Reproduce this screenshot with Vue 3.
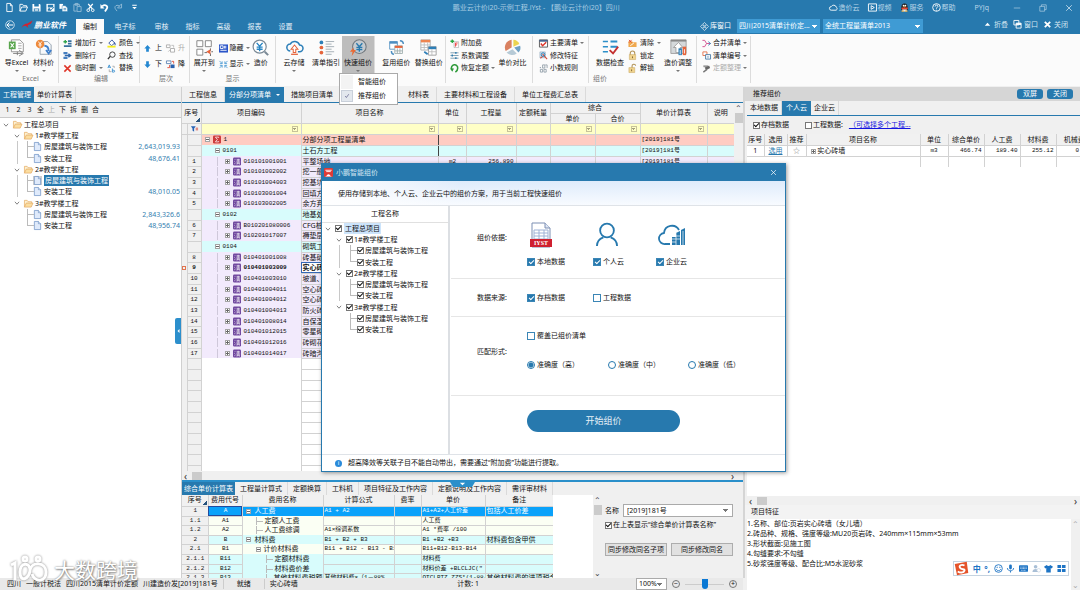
<script setup>
const icons = {
  file: '<path d="M4 1h8l4 5v13H4zM12 1v5h4" class="s"/>',
  open: '<path d="M2 18V3h6l2 3h7v3M2 18l4-9h13l-4 9z" class="s"/>',
  save: '<path d="M1 2h16l2 2v15H1z" fill="currentColor"/><path d="M5 2h10v6H5zM4 12h12v7H4z" fill="#2779ae"/><path d="M6 14h8v3H6z" fill="currentColor"/>',
  saveas: '<path d="M1 2h18v17H1z" fill="currentColor"/><path d="M4 4h12v6H4zM4 13l4-2 4 6H4z" fill="#2779ae"/><path d="M10 17l8-8" stroke="#2779ae" stroke-width="2"/>',
  copy: '<path d="M1 2h8v11H1z" fill="currentColor"/><path d="M7 6h7l5 5v8H7z" fill="currentColor" stroke="#2779ae"/><path d="M10 12h6M10 15h6" stroke="#2779ae" stroke-width="1.5"/>',
  paste: '<path d="M8 18H2V3h12v4M5 1h6v4H5zM9 8h9v11H9z" class="s"/>',
  cut: '<path d="M5 2l9 11M15 2L6 13" stroke="currentColor" stroke-width="3"/><circle cx="5" cy="16" r="3" class="s"/><circle cx="15" cy="16" r="3" class="s"/>',
  undo: '<path d="M5 7c7-5 14 0 10 6l-4 6" fill="none" stroke="currentColor" stroke-width="4"/><path d="M1 2v10h9z" fill="currentColor"/>',
  redo: '<path d="M15 7C8 2 1 8 6 14l3 4" class="s"/><path d="M19 2v9h-9z" class="s"/>',
  more: '<path d="M5 4h10v2H5zM5 9h10l-5 5z" fill="currentColor"/>',
  cloudw: '<path d="M5 16a4 4 0 010-8 6 6 0 0111 1 4 4 0 010 7z" class="s"/>',
  play: '<path d="M1 2h18v16H1zM7 6l7 4-7 4z" class="s"/>',
  qq: '<path d="M3 12C3 3 6 1 10 1s7 2 7 11l1 4-3-1v3H5v-3l-3 1z" fill="#222"/><path d="M5 14h10v5H5z" fill="#eee"/><path d="M4 10h13v4H3z" fill="#e8432e"/><circle cx="8" cy="6" r="2" fill="#fff"/><circle cx="12" cy="6" r="2" fill="#fff"/><path d="M7 8h6l-3 2z" fill="#f7a520"/><path d="M3 18h6M11 18h6" stroke="#f7a520" stroke-width="2"/>',
  help: '<circle cx="10" cy="10" r="8.5" class="s"/><path d="M7 8c0-5 7-4 6 0-1 2-3 2-3 4v1M10 15v2" class="s"/>',
  min: '<path d="M2 10h16" class="s t"/>',
  rest: '<path d="M2 6h12v12H2zM6 6V2h12v12h-4" class="s t"/>',
  x: '<path d="M3 3l14 14M17 3L3 17" class="s"/>',
  xb: '<path d="M4 4l12 12M16 4L4 16" stroke="currentColor" stroke-width="4"/>',
  up: '<path d="M4 13l6-7 6 7z" fill="currentColor"/>',
  win: '<path d="M2 1h11v10H2zM7 7h11v11H7z" class="s"/><path d="M7 7h11v4H7z" fill="currentColor"/>',
  back: '<circle cx="10" cy="10" r="8.5" class="s t"/><path d="M16 10H5M9 5l-5 5 5 5" class="s"/>',
  diam: '<path d="M10 1l4 4-4 4-4-4zM5 6l4 4-4 4-4-4zM15 6l4 4-4 4-4-4zM10 11l4 4-4 4-4-4z" class="s t"/>',
  excel: '<path d="M4 1h10l4 4v10H4z" fill="#fff" stroke="#888"/><path d="M12 5h4M12 8h4M12 11h4" stroke="#999"/><path d="M1 3h8v9H1z" fill="#58a54d"/><path d="M3 5l4 5M7 5l-4 5" stroke="#fff" stroke-width="1.4"/><path d="M6 17h11M13 13l5 4-5 3M11 15v4" fill="none" stroke="#777"/>',
  matprice: '<path d="M6 3h9l4 4v11H6z" fill="#f7f9fb" stroke="#8a98a8"/><circle cx="6" cy="6" r="5" fill="#ee8a3c"/><path d="M4 3l2 3 2-3M6 6v4M4 7h4" stroke="#fff" fill="none"/><path d="M11 8c4 0 5 3 5 6M13 13l3 4 3-4" fill="none" stroke="#3f7fcb" stroke-width="2.2"/>',
  addrow: '<path d="M1 6h8M5 2v8" stroke="#2fa44c" stroke-width="3"/><path d="M11 3h8v4h-8zM11 9h8v3h-8zM2 14h17v4H2z" fill="#39709e"/>',
  delrow: '<path d="M1 2h9v5H1zM1 13h9v5H1z" fill="#467fc0"/><path d="M4 10h12M12 6l5 4-5 4" fill="none" stroke="#2e66ac" stroke-width="3"/>',
  redx: '<path d="M3 3l14 14M17 3L3 17" stroke="#df3428" stroke-width="3.4"/>',
  paint: '<path d="M4 9l7-7 6 7-7 6z" fill="#fff" stroke="#2c4f9e" stroke-width="2"/><path d="M16 8c3 3 2 5 1 5" stroke="#2c4f9e" stroke-width="2.5" fill="none"/><path d="M1 15h18v4H1z" fill="#f7ee1b"/>',
  find: '<circle cx="12" cy="8" r="6" fill="none" stroke="#333" stroke-width="2"/><path d="M7 12l-5 6" stroke="#333" stroke-width="3"/>',
  repl: '<path d="M2 9l3-7 3 7M3 7h4M12 10v8h3a2 2 0 000-4h-3" fill="none" stroke="#3d92d0" stroke-width="2"/><path d="M5 12v5h5M12 5h4v4" fill="none" stroke="#999" stroke-width="1.6"/>',
  aup: '<path d="M10 2l7 8h-4v7H7v-7H3z" fill="#2387d1"/>',
  adn: '<path d="M10 18l7-8h-4V3H7v7H3z" fill="#2387d1"/>',
  lvup: '<path d="M1 2h8v6H1zM10 10h9v8h-9z" fill="#fff" stroke="#aaa" stroke-width="2"/><path d="M5 17l5-5M12 3h5v5" stroke="#bbb" fill="none" stroke-width="2"/>',
  lvdn: '<path d="M1 2h10v6H1z" fill="#fff" stroke="#5e84b4" stroke-width="2"/><path d="M10 10h9v8h-9z" fill="#2a62ad"/><path d="M13 3h4v5M3 17h5v-6" stroke="#df4b38" fill="none" stroke-width="2"/>',
  expand: '<path d="M1 2h7v7H1zM11 2h7v7h-7zM1 12h7v7H1z" fill="#fff" stroke="#777"/><path d="M10 16h3M17 11v3M17 17v3M18 15h2" stroke="#555"/><path d="M12 15l5-3v6z" fill="#e8633a"/>',
  hide: '<path d="M0 1h20v18H0z" fill="#2b55c8"/><path d="M3 4h6v6H3zM12 4v6M15 4v6M3 14h14" fill="none" stroke="#fff" stroke-width="2"/>',
  show: '<path d="M1 2l6 6M19 2l-6 6M1 18l6-6M19 18l-6-6M7 3v5H2M13 3v5h5M7 17v-5H2M13 17v-5h5" stroke="#3d92d0" stroke-width="1.7" fill="none"/>',
  yenm: '<circle cx="9" cy="9" r="7.7" fill="#fff" stroke="#7b8a96" stroke-width="1.4"/><path d="M15 15l4 4" stroke="#7b8a96" stroke-width="2.4"/><path d="M5.5 4.5l3.5 4 3.5-4M9 8.5v6M5.5 9.500h7M5.500 12h7" fill="none" stroke="#2785c4" stroke-width="1.600"/>',
  cloudup: '<path d="M5 14a4 4 0 010-8 6 6 0 0111 1 4 4 0 010 8h-2" fill="none" stroke="#2d7fb8" stroke-width="1.8"/><path d="M10 7l-4 5h2.500v4h3v-4H14z" fill="#fff" stroke="#e5643b" stroke-width="1.2"/><path d="M6 18h8" stroke="#e5643b" stroke-width="1.5"/>',
  guide: '<circle cx="4" cy="4" r="2.2" fill="#2d7fb8"/><circle cx="4" cy="10" r="2.2" fill="#e5643b"/><circle cx="4" cy="16" r="2.2" fill="#e5643b"/><path d="M9 3h10M9 6h7M9 9h10M9 12h7M9 15h10M9 18h7" stroke="#9aa4ac"/>',
  quick: '<circle cx="11" cy="9" r="8" fill="#c5cbd0" stroke="#6f777d" stroke-width="1.2"/><path d="M7.500 5l3.500 4 3.500-4M11 9v6M7.500 10h7M7.500 12.500h7" fill="none" stroke="#2779ae" stroke-width="1.6"/><path d="M4 10l-4 5h3l-1 5 5-7H4z" fill="#ea6a34"/>',
  reuse: '<path d="M2 3h9v9H2z" fill="#fff" stroke="#4c8ec0"/><path d="M8 8h9v9H8z" fill="#fff" stroke="#9aa"/><path d="M2 3h9v2.500H2z" fill="#4c8ec0"/><path d="M8 8h9v2.500H8z" fill="#e5643b"/><path d="M14 2c3 0 4 2 4 4M4 14c0 3 1 4 3 4" fill="none" stroke="#4c8ec0" stroke-width="1.7"/><path d="M11 11v6M14 11v6M8 14h9" stroke="#9aa"/>',
  swap: '<path d="M1 1h11v12H1z" fill="#fff" stroke="#aaa"/><path d="M1 1h11v3H1z" fill="#ee8550"/><path d="M1 7h11M1 10h11M5 4v9M9 4v9" stroke="#bbb"/><path d="M10 9h9v10h-9z" fill="#fff" stroke="#999"/><path d="M10 9h9v3h-9z" fill="#2d7fb8"/><path d="M14 12v7M10 15h9" stroke="#bbb"/><path d="M5 15l4 3" stroke="#2d7fb8" stroke-width="2"/>',
  addf: '<path d="M1 5h8M5 1v8" stroke="#25a83f" stroke-width="3"/><path d="M9 6h10v13H9z" fill="#fff" stroke="#888"/><path d="M12 17V9h5M12 13h4" stroke="#e33" stroke-width="2" fill="none"/>',
  sliders: '<path d="M1 4h18M1 10h18M1 16h18" stroke="#4a7692" stroke-width="1.5"/><path d="M13 2v4M5 8v4M13 14v4" stroke="#2779ae" stroke-width="3"/>',
  restore: '<path d="M4 12A7 7 0 1117 10c0 4-2 6-5 8" fill="none" stroke="#2f9a3a" stroke-width="3.5"/><path d="M0 10h9l-4 7z" fill="#2f9a3a"/>',
  pie: '<path d="M9 10V1a9 9 0 00-7 13z" fill="#d98161"/><path d="M11 9V1a8 8 0 017 5z" fill="#ecd44f"/><path d="M12 10l7-2a8 8 0 01-2 8z" fill="#6fa1c4"/><path d="M10 12l5 5a9 9 0 01-12-1z" fill="#b6cad6"/>',
  flag: '<path d="M1 2h18v16H1z" fill="#fff" stroke="#555" stroke-width="2"/><path d="M1 2h18v4H1z" fill="#47648f"/><path d="M4 10l4 5 8-8" fill="none" stroke="#df3428" stroke-width="3"/>',
  tool: '<path d="M2 2h12v13H2z" fill="#cfe3f2" stroke="#6f8da7"/><path d="M8 7l10 11M3 16l5-4" stroke="#d94b38" stroke-width="2.5"/><circle cx="9" cy="8" r="4" fill="none" stroke="#2779ae" stroke-width="2"/>',
  dec: '<path d="M8 2h5v7H8zM14 2h4v7M3 12h5v6H3zM11 12h5v6h-5z" fill="none" stroke="#8b98a4" stroke-width="1.8"/><circle cx="3" cy="8" r="1.5" fill="#8b98a4"/>',
  check: '<path d="M1 3h6M1 9h6M1 15h6" stroke="#2d8fc9" stroke-width="1.8"/><path d="M10 3h8M10 9h8" stroke="#2d8fc9" stroke-width="2.4"/><path d="M9 13l4 4 6-8" fill="none" stroke="#c43131" stroke-width="2.2"/>',
  clear: '<path d="M1 5h8l2 2h8v11H1z" fill="#f0a94f"/><path d="M2 2l6 6M8 2L2 8" stroke="#e04731" stroke-width="2"/><path d="M5 15l8-6" stroke="#fff" stroke-width="2"/>',
  lock: '<path d="M5 9V5a5 5 0 0110 0v4" fill="none" stroke="#b39458" stroke-width="2.4"/><path d="M3 8h14v11H3z" fill="#f1d48e" stroke="#c19d51"/><path d="M10 12v4" stroke="#7a6232" stroke-width="2"/>',
  unlock: '<path d="M9 9V5a4 4 0 018-1" fill="none" stroke="#b39458" stroke-width="2.4"/><path d="M2 8h13v11H2z" fill="#f1d48e" stroke="#c19d51"/><path d="M8 12v4" stroke="#7a6232" stroke-width="2"/>',
  adjust: '<path d="M1 1h18v16H1z" fill="#d5d9db" stroke="#999"/><path d="M1 1h18v2H1z" fill="#888"/><path d="M10 4l-6 6h3v6h5v-6h3z" fill="#fff" stroke="#999"/><path d="M10 11h4v8h-4z" fill="#2d7fb8"/><path d="M15 9h4v10h-4z" fill="#e5643b"/><path d="M12 13v5M17 12v5" stroke="#fff"/>',
  merge: '<path d="M1 3h5l4 7-4 7H1M10 10h9" fill="none" stroke="#cf4a8a" stroke-width="2"/><path d="M14 6l5 4-5 4" fill="none" stroke="#2d7fb8" stroke-width="2"/>',
  num: '<path d="M2 2h9v8H2z" fill="#fff" stroke="#e1704a" stroke-width="2"/><path d="M8 8h11v10H8z" fill="#fff" stroke="#4a7ba5" stroke-width="2"/><path d="M11 12h5M11 15h5" stroke="#4a7ba5"/>',
  tidy: '<path d="M3 3h11v4H3z" fill="#999"/><path d="M6 8l10-4 2 5-9 5z" fill="#666"/><path d="M3 18l8-6" stroke="#777" stroke-width="3"/>',
  folder: '<path d="M1 18V3h6l2 3h8v3" fill="#fdf0d0" stroke="#e3a75c" stroke-width="1.5"/><path d="M1 18l4-9h15l-4 9z" fill="#fbdda0" stroke="#e3a75c" stroke-width="1.5"/>',
  doc: '<path d="M3 1h9l5 5v13H3z" fill="#dfeafb" stroke="#6d91c4" stroke-width="1.6"/><path d="M12 1v5h5" fill="#fff" stroke="#6d91c4" stroke-width="1.6"/>',
  chev: '<path d="M3 6l7 8 7-8" fill="none" stroke="#444" stroke-width="2.2"/>',
  sigma: '<rect width="20" height="20" rx="3" fill="#cd3c3c"/><path d="M14 6V4H6l5 6-5 6h8v-2" fill="none" stroke="#fff" stroke-width="1.8"/>',
  qing: '<rect width="20" height="20" rx="3" fill="#70479f"/><path d="M4 4l2 2M3 9l2 2M3 17l3-4M9 5h8M9 8h8M8 11h10M13 3v8M10 13h6v5M10 13v5M10 15h6" fill="none" stroke="#fff" stroke-width="1.3"/>',
  filt: '<path d="M1 3h12L9 9v8l-4-3V9z" fill="#2763b5"/><path d="M13 8h6M13 12h6" stroke="#d23b2a" stroke-width="2"/>',
}

const quick = ['file', 'open', 'save', 'saveas', 'copy', 'paste', 'cut', 'undo', 'redo']
const menus = ['编制', '电子标', '审核', '指标', '高级', '报表', '设置']

const b = (t, i, c) => ({ big: true, t, i, c })
const s = (...rows) => ({ rows })
const groups = [
  { k: 'g-excel', name: 'Excel', parts: [b('导Excel', 'excel', 1), b('材料价', 'matprice', 1)] },
  { k: 'g-edit', name: '编辑', parts: [s(['增加行', 'addrow', 1], ['删除行', 'delrow'], ['临时删', 'redx', 1]), s(['颜色', 'paint', 1], ['查找', 'find'], ['替换', 'repl'])] },
  { k: 'g-level', name: '层次', parts: [s(['上', 'aup'], ['下', 'adn']), s(['升', 'lvup', 0, 1], ['降', 'lvdn'])] },
  { k: 'g-show', name: '显示', parts: [b('展开到', 'expand', 1), s(['隐藏', 'hide', 1], ['显示', 'show', 1]), b('造价', 'yenm')] },
  { k: 'g-cloud', parts: [b('云存储', 'cloudup', 1), b('清单指引', 'guide'), { ...b('快速组价', 'quick', 1), on: 1 }] },
  { k: 'g-reuse', parts: [b('复用组价', 'reuse'), b('替换组价', 'swap')] },
  { k: 'g-fee', parts: [s(['附加费', 'addf'], ['系数调整', 'sliders'], ['恢复定额', 'restore', 1]), b('单价对比', 'pie')] },
  { k: 'g-main', parts: [s(['主要清单', 'flag', 1], ['修改特征', 'tool'], ['小数规则', 'dec'])] },
  { k: 'g-check', name: '组价', parts: [b('数据检查', 'check'), s(['清除', 'clear', 1], ['锁定', 'lock'], ['解锁', 'unlock']), b('造价调整', 'adjust', 1)] },
  { k: 'g-merge', parts: [s(['合并清单', 'merge', 1], ['清单编号', 'num', 1], ['定额整理', 'tidy', 1, 1])] },
]

const tree = [
  { l: 0, t: '工程总项目' },
  { l: 1, t: '1#教学楼工程' },
  { l: 2, t: '房屋建筑与装饰工程', v: '2,643,019.93' },
  { l: 2, t: '安装工程', v: '48,676.41', end: 1 },
  { l: 1, t: '2#教学楼工程' },
  { l: 2, t: '房屋建筑与装饰工程', sel: 1 },
  { l: 2, t: '安装工程', v: '48,010.05', end: 1 },
  { l: 1, t: '3#教学楼工程' },
  { l: 2, t: '房屋建筑与装饰工程', v: '2,843,326.6', last: 1 },
  { l: 2, t: '安装工程', v: '48,956.74', end: 1, last: 1 },
]

const rows = [
  ['', '1', '分部分项工程量清单', 'red'],
  ['', '0101', '土石方工程', 'cyan'],
  ['1', '010101001001', '平整场地', 'item', 'm2', '256.890'],
  ['2', '010101002002', '挖一般土方', 'item'],
  ['3', '010101004003', '挖基坑土方', 'item'],
  ['4', '010103001004', '回填方', 'item'],
  ['5', '010103002005', '余方弃置', 'item'],
  ['', '0102', '地基处理', 'cyan'],
  ['6', 'B010201080006', 'CFG桩', 'item'],
  ['7', '010201017007', '褥垫层', 'item'],
  ['', '0104', '砌筑工程', 'cyan'],
  ['8', '010401001008', '砖基础', 'item'],
  ['9', '010401003009', '实心砖墙', 'item cur'],
  ['10', '010401003010', '坡道、', 'item'],
  ['11', '010401004011', '空心砖墙', 'item'],
  ['12', '010401004012', '空心砖墙', 'item'],
  ['13', '010401004013', '防火砖墙', 'item'],
  ['14', '010401008014', '自保温墙', 'item'],
  ['15', '010401012015', '零星砌砖', 'item'],
  ['16', '010401012016', '砖砌花池', 'item'],
  ['17', '010401014017', '砖暗沟', 'item'],
  ...Array.from({ length: 11 }, () => ['', '', '', 'blank']),
]

const fees = [
  ['1', 'A', '人工费', 'A1 + A2', 'A1+A2+人工价差', '包括人工价差', 0, 'on', 1],
  ['1.1', 'A1', '定额人工费', '', '人工费', '', 1, 'ivory'],
  ['1.2', 'A2', '人工费综调', 'A1×综调系数', 'A1 *费率 /100', '', 1, 'ivory'],
  ['2', 'B', '材料费', 'B1 + B2 + B3', 'B1 +B2 +B3', '材料费包含甲供', 0, 'aqua', 1],
  ['2.1', 'B1', '计价材料费', 'B11 + B12 - B13 - B14', 'B11+B12-B13-B14', '', 1, 'ivory', 1],
  ['2.1.1', 'B11', '定额材料费', '', '材料费', '', 2, 'aqua'],
  ['2.1.2', 'B12', '材料费价差', '', '材料价差 +BLCLJC("', '', 2, 'aqua'],
  ['2.1.3', 'B13', '其他材料费税额', '其他材料费×（1－88%', 'QTCLBTZ.ZZS*(1-88/', '其他材料费的进项税金', 2, 'aqua'],
]
const lowTabs = ['综合单价计算表', '工程量计算式', '定额换算', '工料机', '项目特征及工作内容', '定额说明及工作内容', '需评审材料']
</script>

<template>
  <div class="app">
    <header class="top">
      <div class="titlebar">
        <div class="qa">
          <button v-for="q in quick" :key="q" :class="{ dim: q === 'redo' || q === 'paste' }" :aria-label="q"><svg viewBox="0 0 20 20" v-html="icons[q]" /></button>
        </div>
        <svg class="more" viewBox="0 0 20 20" v-html="icons.more" />
        <h1>鹏业云计价i20-示例工程.iYst - 【鹏业云计价i20】四川</h1>
        <div class="links">
          <a href="#"><svg viewBox="0 0 20 20" v-html="icons.cloudw" />造价云</a>
          <a href="#"><svg viewBox="0 0 20 20" v-html="icons.play" />视频</a>
          <a href="#"><svg viewBox="0 0 20 20" v-html="icons.qq" />服务</a>
          <a href="#"><svg viewBox="0 0 20 20" v-html="icons.help" />帮助</a>
          <span class="user">PYJq</span>
        </div>
        <div class="winbtns">
          <button v-for="w in ['min', 'rest', 'x']" :key="w" :aria-label="w"><svg viewBox="0 0 20 20" v-html="icons[w]" /></button>
        </div>
      </div>
      <div class="menubar">
        <button class="back" aria-label="返回"><svg viewBox="0 0 20 20" v-html="icons.back" /></button>
        <div class="brand">
          <svg viewBox="0 0 24 18"><path d="M1 16c2-6 7-9 12-9L23 1l-3 6-7 4 2 5-5-4c-4-1-6 1-9 4z" fill="#d8202c" /></svg>
          <span>鹏业软件</span>
        </div>
        <nav><button v-for="(m, i) in menus" :key="m" :class="{ on: i === 0, wide: i === 1 }">{{ m }}</button></nav>
        <div class="lib">
          <span class="libt"><svg viewBox="0 0 20 20" v-html="icons.diam" />库窗口</span>
          <select class="s1" aria-label="定额库"><option>四川2015清单计价定...</option></select>
          <select class="s2" aria-label="清单库"><option>全统工程量清单2013</option></select>
        </div>
        <div class="wctl">
          <button><svg viewBox="0 0 20 20" v-html="icons.up" />折叠</button>
          <button><svg viewBox="0 0 20 20" v-html="icons.win" />窗口</button>
          <button><svg viewBox="0 0 20 20" v-html="icons.xb" />关闭</button>
        </div>
      </div>
    </header>

    <section class="ribbon">
      <div v-for="g in groups" :key="g.k" class="grp" :class="g.k">
        <div class="parts">
          <template v-for="(p, i) in g.parts" :key="i">
            <button v-if="p.big" class="big" :class="{ on: p.on }">
              <svg viewBox="0 0 20 20" v-html="icons[p.i]" /><span>{{ p.t }}</span><i v-if="p.c" class="car" />
            </button>
            <div v-else class="small" :class="{ two: p.rows.length === 2 }">
              <button v-for="r in p.rows" :key="r[0]" :class="{ off: r[3] }"><svg viewBox="0 0 20 20" v-html="icons[r[1]]" />{{ r[0] }}<i v-if="r[2]" class="car" /></button>
            </div>
          </template>
        </div>
        <div class="gname">{{ g.name }}</div>
      </div>
    </section>

    <main class="work">
      <aside class="left">
        <div class="tabs lt"><button class="on">工程管理</button><button>单价计算表</button></div>
        <div class="tb"><button v-for="c in ['1', '2', '3', '全', '上', '下', '拆', '删', '合']" :key="c" :class="{ off: c === '上' }">{{ c }}</button></div>
        <ul class="tree">
          <li v-for="(n, i) in tree" :key="i" :class="['l' + n.l, { sel: n.sel, end: n.end, last: n.last }]">
            <svg v-if="n.l < 2" class="ch" viewBox="0 0 20 20" v-html="icons.chev" /><i v-else class="gd" />
            <svg class="fi" viewBox="0 0 20 20" v-html="icons[n.l < 2 ? 'folder' : 'doc']" />
            <span class="tx">{{ n.t }}</span><span class="v">{{ n.v }}</span>
          </li>
        </ul>
        <button class="fold" aria-label="收起"><svg viewBox="0 0 6 10"><path d="M5 1L1 5l4 4z" fill="#fff" /></svg></button>
      </aside>

      <section class="center">
        <div class="tabs ct">
          <button>工程信息</button><button class="on">分部分项清单<i class="car" /></button><button>措施项目清单</button>
          <span class="gap" /><button>材料表</button><button>主要材料和工程设备</button><button>单位工程费汇总表</button>
        </div>
        <div class="gridwrap">
          <div class="gridclip">
            <table class="grid">
              <colgroup><col class="c0" /><col class="c1" /><col class="c2" /><col class="c3" /><col class="c4" /><col class="c5" /><col class="c6" /><col class="c7" /><col class="c8" /><col class="c9" /><col class="c10" /></colgroup>
              <thead>
                <tr><th rowspan="2" colspan="2" class="sq">序号</th><th rowspan="2">项目编码</th><th rowspan="2">项目名称</th><th rowspan="2">单位</th><th rowspan="2">工程量</th><th rowspan="2">定额耗量</th><th colspan="2">综合</th><th rowspan="2">单价计算表</th><th rowspan="2">说明</th></tr>
                <tr><th>单价</th><th>合价</th></tr>
                <tr class="flt"><td /><td><svg viewBox="0 0 20 20" v-html="icons.filt" /></td><td v-for="k in 9" :key="k"><i v-if="k !== 5 && k !== 9" class="fb" /></td></tr>
              </thead>
              <tbody>
                <tr v-for="(r, i) in rows" :key="i" :class="r[3]">
                  <td class="gut"><i v-if="r[0] === '9'" /></td>
                  <td class="n">{{ r[0] }}</td>
                  <td class="code"><div v-if="r[1]"><i class="pm" /><svg v-if="r[3] !== 'cyan'" viewBox="0 0 20 20" v-html="icons[i ? 'qing' : 'sigma']" />{{ r[1] }}</div></td>
                  <td class="nm">{{ r[2] }}</td>
                  <td class="mono c">{{ r[4] }}</td><td class="mono r">{{ r[5] }}</td><td /><td /><td />
                  <td class="mono">{{ r[3] === 'blank' ? '' : '[2019]181号' }}</td><td />
                </tr>
              </tbody>
            </table>
          </div>
          <div class="vs"><span>⌃</span><i /></div>
        </div>
        <div class="hs"><span>‹</span><i /><b /><span>›</span></div>

        <div class="tabs bt">
          <button v-for="(t, i) in lowTabs" :key="t" :class="{ on: !i }">{{ t }}</button>
          <i class="notch"><svg viewBox="0 0 10 6"><path d="M1 1h8L5 5z" fill="#fff" /></svg></i>
        </div>
        <div class="low">
          <div class="lowclip">
            <table class="fees">
              <colgroup><col class="f0" /><col class="f1" /><col class="f2" /><col class="f3" /><col class="f4" /><col class="f5" /><col class="f6" /></colgroup>
              <thead><tr><th class="sq">序号</th><th>费用代号</th><th>费用名称</th><th>计算公式</th><th>费率</th><th>单价</th><th>备注</th></tr></thead>
              <tbody>
                <tr v-for="f in fees" :key="f[0]" :class="f[7]">
                  <td class="fn mono">{{ f[0] }}</td><td class="mono c fc">{{ f[1] }}</td>
                  <td class="fnm" :class="'d' + f[6]"><div><i v-if="f[8]" class="pm" /><i v-else class="gd" />{{ f[2] }}</div></td>
                  <td class="mono">{{ f[3] }}</td><td /><td class="mono">{{ f[4] }}</td><td>{{ f[5] }}</td>
                </tr>
              </tbody>
            </table>
          </div>
          <div class="vs"><span>⌃</span><i /><b /><span>⌄</span></div>
          <form class="side" @submit.prevent>
            <div class="nmrow"><label for="nm">名称</label><select id="nm"><option>[2019]181号</option></select></div>
            <label class="ck"><input type="checkbox" class="line" checked />在上表显示“综合单价计算表名称”</label>
            <div class="bs"><button>同步修改同名子项</button><button>同步修改同名</button></div>
          </form>
        </div>
      </section>

      <aside class="right">
        <div class="rh"><span>推荐组价</span><button>双屏</button><button>关闭</button></div>
        <div class="tabs rt"><button>本地数据</button><button class="on">个人云</button><button>企业云</button></div>
        <div class="rf">
          <label><input type="checkbox" class="line" checked />存档数据</label>
          <label><input type="checkbox" class="line" />工程数据:</label>
          <a href="#">（可选择多个工程...</a>
        </div>
        <div class="rclip">
          <table class="rtab">
            <colgroup><col class="r0" /><col class="r1" /><col class="r2" /><col class="r3" /><col class="r4" /><col class="r5" /><col class="r5" /><col class="r5" /><col class="r5" /></colgroup>
            <thead><tr><th v-for="h in ['序号', '选用', '推荐', '项目名称', '单位', '综合单价', '人工费', '材料费', '机械费']" :key="h">{{ h }}</th></tr></thead>
            <tbody>
              <tr><td class="c">1</td><td class="c"><a href="#">选用</a></td><td class="c star">☆</td><td><i class="pm plus" /> 实心砖墙</td><td class="mono c">m3</td><td class="mono r">466.74</td><td class="mono r">189.40</td><td class="mono r">255.12</td><td class="mono r">0.00</td></tr>
              <tr class="e"><td colspan="4" /><td /><td /><td /><td /><td /></tr>
            </tbody>
          </table>
        </div>
        <div class="hs"><span>‹</span><i /><b /><span>›</span></div>
        <h2>项目特征</h2>
        <div class="feat">
          <p>1.名称、部位:页岩实心砖墙（女儿墙）<br />2.砖品种、规格、强度等级:MU20页岩砖、240mm×115mm×53mm<br />3.形状截面:见施工图<br />4.勾缝要求:不勾缝<br />5.砂浆强度等级、配合比:M5水泥砂浆</p>
          <div class="vs"><span>⌃</span><b /><span>⌄</span></div>
        </div>
      </aside>
    </main>

    <footer class="status">
      <span>四川</span><span>一般计税法</span><span>四川2015清单计价定额</span><span>川建造价发[2019]181号</span>
      <span class="rd">就绪</span><span class="cn">实心砖墙</span><span class="cnt">计数: 1</span>
      <select aria-label="缩放"><option>100%</option></select>
      <button aria-label="缩小">−</button><input type="range" aria-label="缩放比例" min="0" max="100" value="50" /><button aria-label="放大">+</button>
    </footer>

    <div class="menu" role="menu">
      <button role="menuitem"><i />智能组价</button>
      <button role="menuitem"><i class="k"><svg viewBox="0 0 20 20"><path d="M4 10l4 5 8-11" fill="none" stroke="#447" stroke-width="2" /></svg></i>推荐组价</button>
    </div>

    <div class="dlg" role="dialog" aria-label="小鹏智能组价">
      <div class="dt"><svg viewBox="0 0 20 20"><rect width="20" height="20" rx="3" fill="#df3a35" /><path d="M3 5h14M5 8h10" stroke="#fff" stroke-width="2" /><path d="M1 19c5 0 6-5 9-5s4 5 9 5z" fill="#fff" /></svg><span>小鹏智能组价</span><button aria-label="关闭"><svg viewBox="0 0 20 20" v-html="icons.x" /></button></div>
      <div class="dd">使用存储到本地、个人云、企业云中的组价方案，用于当前工程快速组价</div>
      <div class="db">
        <div class="dl">
          <div class="dlh">工程名称</div>
          <ul class="tree">
            <li v-for="(n, i) in tree" :key="i" :class="['l' + n.l, { end: n.end, last: n.last }]">
              <svg v-if="n.l < 2" class="ch" viewBox="0 0 20 20" v-html="icons.chev" /><i v-else class="gd" />
              <label><input type="checkbox" class="line" checked /><span class="tx">{{ n.t }}</span></label>
            </li>
          </ul>
        </div>
        <form class="df" @submit.prevent>
          <div class="sec a">
            <span class="lb">组价依据:</span>
            <div class="pick">
              <svg viewBox="0 0 22 26"><path d="M2 1h13l5 5v19H2z" fill="#fff" stroke="#7c8fb3" /><path d="M15 1v5h5" fill="#dfe7f5" stroke="#7c8fb3" /><path d="M4 8h14v9H4zM4 11h14M4 14h14M9 8v9M14 8v9" fill="none" stroke="#9fb2d6" /><rect y="17" width="22" height="8" fill="#cf2030" /><text x="11" y="23" text-anchor="middle" class="iy">IYST</text></svg>
              <label><input type="checkbox" checked />本地数据</label>
            </div>
            <div class="pick">
              <svg viewBox="0 0 24 26"><circle cx="12" cy="8" r="7.5" fill="none" stroke="#2779ae" stroke-width="2" /><path d="M1 25c0-5 3-8 7-9.500M23 25c0-5-3-8-7-9.500" fill="none" stroke="#2779ae" stroke-width="2" /></svg>
              <label><input type="checkbox" checked />个人云</label>
            </div>
            <div class="pick">
              <svg class="wd" viewBox="0 0 28 26"><path d="M12 22H7a5.500 5.500 0 01-1-11 8 8 0 0115-3" fill="none" stroke="#2779ae" stroke-width="1.8" /><path d="M14 15h4v8h-4zM18 11l4-2v14h-4zM23 8l4-2v17h-4z" fill="#2779ae" /><path d="M14 17h4M14 20h4M18 14h4M18 17h4M18 11v12M25 9v14" stroke="#fff" stroke-width=".7" /></svg>
              <label><input type="checkbox" checked />企业云</label>
            </div>
          </div>
          <div class="sec s">
            <span class="lb">数据来源:</span><label><input type="checkbox" checked />存档数据</label><label><input type="checkbox" />工程数据</label>
          </div>
          <div class="sec m">
            <span class="lb">匹配形式:</span>
            <div class="opts">
              <label><input type="checkbox" />覆盖已组价清单</label>
              <div class="rad"><label><input type="radio" name="acc" checked />准确度（高）</label><label><input type="radio" name="acc" />准确度（中）</label><label><input type="radio" name="acc" />准确度（低）</label></div>
            </div>
          </div>
          <div class="go"><button>开始组价</button></div>
        </form>
      </div>
      <div class="dft"><i>i</i>超高降效等关联子目不能自动带出，需要通过“附加费”功能进行提取。</div>
    </div>

    <div class="ime">
      <svg class="so" viewBox="0 0 20 20"><path d="M1 4L17 1l2 15-15 3z" fill="#e4532a" /><path d="M14 6c-4-2-8 0-6 3s7 1 6 4-6 3-9 1" fill="none" stroke="#fff" stroke-width="2.5" /></svg>
      <b>中</b><b>°,</b>
      <svg viewBox="0 0 20 20"><circle cx="10" cy="10" r="8.5" class="s" /><path d="M5 11c1 5 9 5 10 0M7 6v3M13 6v3" class="s" /></svg>
      <svg viewBox="0 0 20 20"><rect x="7" y="1" width="6" height="11" rx="3" fill="currentColor" /><path d="M3 9c0 8 14 8 14 0M10 15v4" class="s" /></svg>
      <svg viewBox="0 0 20 20"><rect x="0" y="3" width="20" height="14" rx="1" fill="currentColor" /><path d="M3 7h14M3 10h14M5 14h10" stroke="#fff" stroke-width="1.5" stroke-dasharray="2 1" /></svg>
      <svg class="gy" viewBox="0 0 20 20"><circle cx="8" cy="6" r="4" fill="currentColor" /><path d="M1 18c0-9 13-9 14 0z" fill="currentColor" /><circle cx="15" cy="14" r="4" fill="#fff" stroke="currentColor" /></svg>
      <svg viewBox="0 0 20 20"><path d="M6 2c2 3 6 3 8 0l6 4-3 4-2-1v10H5V9l-2 1-3-4z" fill="currentColor" /></svg>
      <svg viewBox="0 0 20 20"><path d="M1 2h8v7H1zM11 2h8v7h-8zM1 11h8v7H1zM11 11h8v7h-8z" fill="currentColor" /></svg>
    </div>

    <div class="mark">
      <svg viewBox="0 0 40 28"><path d="M2 9l4-2v17M11 16c0-10 10-10 10-2s-10 14-10 2zM21 14c2-9 16-8 16 2s-11 11-14 2" /><circle cx="16" cy="3" r="2" /><circle cx="29" cy="3" r="2" /></svg>
      <span>大数跨境</span>
    </div>
  </div>
</template>

<style>
html, body { margin: 0; overflow: hidden; }
svg .s { fill: none; stroke: currentColor; stroke-width: 2; }
svg .t { stroke-width: 1.4; }
</style>

<style scoped>
.app { position: relative; height: 100vh; display: flex; flex-direction: column; background: #f0f0f0; font: 7px/10px "Noto Sans", "Noto Sans CJK SC", sans-serif; color: #111; overflow: hidden; white-space: nowrap; }
.app *, .app *::before, .app *::after { box-sizing: border-box; }
button, select, input { font: inherit; color: inherit; margin: 0; padding: 0; border: 0; background: none; border-radius: 0; }
button { display: inline-flex; align-items: center; justify-content: center; white-space: nowrap; }
a { color: inherit; }
svg { flex: none; display: block; overflow: visible; }
ul { list-style: none; margin: 0; padding: 0; }
h1, h2, p { margin: 0; font-size: 7px; font-weight: 400; }
i { font-style: normal; }
label { display: inline-flex; align-items: center; }
.car { display: inline-block; border: 2px solid transparent; border-top-color: #777; border-bottom: 0; margin-left: 2px; flex: none; }

/* title bar and menu */
.top { background: #2779ae; color: #fff; flex: none; }
.titlebar { height: 15px; display: flex; align-items: center; padding: 0 7px 0 5px; }
.qa { width: 117px; display: flex; justify-content: space-between; }
.qa svg, .more, .wctl svg, .libt svg, .links svg { width: 9px; height: 9px; }
.dim { opacity: .5; }
.more { margin-left: 8px; }
h1 { flex: 1; text-align: center; padding-left: 105px; color: #a9cce2; }
.links { display: flex; gap: 8px; align-items: center; margin-right: 24px; color: #b9d6e8; }
.links a { display: flex; align-items: center; gap: 1px; text-decoration: none; }
.links svg { color: #fff; }
.user { margin-left: 11px; }
.winbtns { display: flex; gap: 18px; color: #cfe3f0; }
.winbtns svg { width: 8px; height: 8px; }
.menubar { height: 19px; display: flex; align-items: center; padding: 0 12px 0 5px; }
.back svg { width: 10px; height: 10px; }
.brand { display: flex; align-items: center; width: 61px; padding-left: 6px; font-weight: 700; font-style: italic; font-size: 8px; gap: 1px; }
.brand svg { width: 12px; height: 9px; }
nav { display: flex; align-self: stretch; align-items: stretch; padding-top: 4px; flex: 1; }
nav button { width: 31px; color: #e3eff7; }
nav button.wide { width: 42px; }
nav .on { width: 28px; background: #fbfbfb; color: #222; }
.lib { display: flex; align-items: center; gap: 3px; align-self: stretch; padding: 4px 0 1px; }
.libt { display: flex; align-items: center; gap: 1px; margin-right: 3px; }
select { appearance: none; }
.lib select { align-self: stretch; padding-left: 2px; color: #fff; background: conic-gradient(from 315deg at 50% 100%, #fff 90deg, transparent 0) right 3px center / 5px 3px no-repeat #3f9bd4; }
.s1 { width: 83px; }
.s2 { width: 100px; }
.wctl { display: flex; gap: 5px; margin-left: 60px; color: #d5e7f2; }
.wctl button { gap: 2px; }
.wctl svg { color: #fff; }

/* ribbon */
.ribbon { flex: none; height: 52px; background: #fbfbfb; display: flex; padding-top: 2px; }
.grp { display: flex; flex-direction: column; flex: none; border-right: 1px solid #dcdcdc; height: 47px; }
.parts { display: flex; flex: 1; }
.gname { height: 9px; line-height: 9px; text-align: center; color: #777; }
.big { flex-direction: column; width: 31px; height: 38px; justify-content: flex-start; padding-top: 3px; }
.big svg { width: 17px; height: 17px; }
.big span { line-height: 10px; margin-top: 2px; }
.big .car { margin: 2px 0 0; }
.big.on { background: #bdbdbd; }
.small { display: flex; flex-direction: column; padding-top: 1px; }
.small button { height: 12px; justify-content: flex-start; gap: 3px; }
.small button .car { margin: 0; }
.small button:nth-child(2) { height: 13px; }
.small.two { padding-top: 4px; }
.small.two button { height: 16px; }
.small svg { width: 9px; height: 9px; }
.off { color: #aaa; }
.g-excel { width: 59px; padding-left: 3px; }
.g-excel .big { width: 27px; }
.g-edit { width: 81px; padding-left: 4px; }
.g-edit .parts, .g-level .parts { gap: 4px; }
.g-level { width: 50px; padding-left: 3px; }
.g-show { width: 86px; }
.g-show .big { width: 29px; }
.g-show .small { width: 28px; }
.g-show .small button { gap: 2px; }
.g-cloud { width: 98px; padding-left: 2px; border: 0; }
.g-cloud .big { width: 32px; }
.g-reuse { width: 72px; padding-left: 5px; border-left: 1px solid #dcdcdc; }
.g-reuse .big { width: 33px; }
.g-fee { width: 87px; padding-left: 4px; }
.g-fee .small { width: 47px; }
.g-fee .small button, .g-main .small button, .g-merge .small button { gap: 2px; }
.g-main { width: 56px; padding-left: 6px; }
.g-check { width: 108px; padding-left: 4px; }
.g-check .big { width: 34px; }
.g-check .small { width: 34px; padding-left: 1px; }
.g-check .gname { text-align: left; }
.g-merge { width: 54px; padding-left: 5px; }

/* shared tabs, trees, scroll bars */
.work { flex: 1; display: flex; min-height: 0; padding-top: 1px; }
.tabs { flex: none; display: flex; height: 16px; border-bottom: 1px solid #2779ae; position: relative; }
.tabs button { padding: 0 7px; border-right: 1px solid #dadada; }
.tabs .on { background: #2779ae; color: #fff; border: 0; }
.tabs .on .car { border-top-color: #fff; margin-left: 5px; }
.tree li { display: flex; align-items: center; height: 11px; line-height: 11px; position: relative; }
.tree li:nth-child(4n) { height: 12px; }
.ch { width: 6px; height: 6px; margin-right: 4px; }
.fi { width: 9px; height: 9px; margin-right: 2px; }
.tree .l0 { padding-left: 3px; }
.tree .l1 { padding-left: 14px; }
.tree .l2 { padding-left: 27px; }
.tree .l2::before { content: ""; position: absolute; left: 17px; top: 0; bottom: 0; border-left: 1px solid #c8c8c8; }
.tree .last::before { display: none; }
.gd { width: 6px; align-self: stretch; border-left: 1px solid #bbb; position: relative; }
.gd::after { content: ""; position: absolute; left: 0; top: 5px; width: 6px; border-top: 1px solid #bbb; }
.tree .end .gd { height: 6px; align-self: flex-start; }
.l2 .fi { margin: 0 2px 0 0; }
.v { margin-left: auto; color: #3580b0; padding-right: 1px; }
.tree .sel .tx { background: #2779ae; color: #fff; padding: 0 1px; }
.tree .sel .fi { background: #cfcfcf; }
.vs { width: 9px; flex: none; display: flex; flex-direction: column; align-items: center; background: #f0f0f0; line-height: 10px; font-size: 8px; color: #444; }
.vs i { width: 8px; height: 10px; background: #cbcbcb; }
.vs b, .hs b { flex: 1; }
.hs { flex: none; height: 9px; display: flex; align-items: center; background: #f0f0f0; font-size: 10px; line-height: 8px; padding: 0 9px 0 2px; color: #333; }
.hs i { width: 10px; height: 8px; background: #cbcbcb; margin-left: 5px; }

/* project tree */
.left { width: 182px; display: flex; flex-direction: column; position: relative; border-right: 1px solid #d0d0d0; flex: none; }
.lt button, .lt .on { padding: 0 3px; }
.tb { display: flex; height: 15px; padding-left: 2px; border-bottom: 1px solid #c9c9c9; flex: none; }
.tb button { width: 11px; }
.left .tree { flex: 1; background: #fff; padding-top: 1px; }
.fold { position: absolute; right: 0; top: 231px; width: 6px; height: 26px; background: #2c8fcc; border-radius: 2px 0 0 2px; }
.fold svg { width: 3px; height: 6px; }

/* main grid */
.center { flex: 1; min-width: 0; display: flex; flex-direction: column; border-right: 2px solid #d5d5d5; }
.ct .on { padding: 0 4px; }
.gap { width: 60px; }
.gridwrap { flex: 1; display: flex; min-height: 0; }
.gridclip { flex: 1; overflow: hidden; background: #fff; min-width: 0; }
table { border-collapse: collapse; table-layout: fixed; }
th, td { padding: 0; font-weight: 400; overflow: hidden; border: 1px solid #d2d2d2; line-height: 9px; }
th { background: #f1f1f1; }
.grid { width: 552px; border-style: hidden; }
.c0 { width: 5px; }
.c1 { width: 14px; }
.c2 { width: 100px; }
.c3 { width: 137px; }
.c4 { width: 28px; }
.c5 { width: 50px; }
.c6 { width: 34px; }
.c7, .c8 { width: 45px; }
.c9 { width: 67px; }
.c10 { width: 27px; }
.grid thead tr { height: 10px; }
.grid .flt { height: 11px; background: #ffffc6; }
.flt td { text-align: right; vertical-align: middle; }
.flt svg { width: 9px; height: 8px; margin-left: 2px; }
.flt td:first-child, .flt td:nth-child(2) { background: #f1f1f1; }
.fb { display: block; width: 6px; height: 6px; border: 1px solid #c7c39a; margin: 0 3px 0 auto; background: conic-gradient(from 315deg at 50% 100%, #a5a17c 90deg, transparent 0) center / 3px 2px no-repeat; }
.grid tbody tr { height: 11px; }
.grid tbody tr:nth-child(3n) { height: 10px; }
.red { background: #ffccc2; }
.cyan, .aqua { background: #d8fcfc; }
.item { background: #f2eafc; }
.gut, .n { background: #f0f0f0; text-align: center; }
.grid .gut { border: 0; }
.gut i { display: block; width: 4px; height: 4px; border: 1px solid #e2744f; }
.n, .mono, .code { font-family: "Liberation Mono", "Noto Sans CJK SC", monospace; font-size: 6px; }
.c { text-align: center; }
.r { text-align: right; padding-right: 2px; }
.nm, .grid .mono { padding-left: 1px; }
.code { border-top: 0; border-bottom: 0; }
.code div { display: flex; align-items: center; gap: 3px; height: 9px; padding-left: 3px; position: relative; }
.cyan .code div { padding-left: 13px; }
.item .code div { padding-left: 23px; }
.item .code div::before { content: ""; position: absolute; left: 15px; top: 0; bottom: 0; border-left: 1px solid #cfc8da; }
.code svg { width: 8px; height: 9px; }
.pm { display: inline-block; width: 5px; height: 5px; border: 1px solid #a5a5a5; background: linear-gradient(#666, #666) center / 3px 1px no-repeat #fff; flex: none; }
.item .pm, .pm.plus { background: linear-gradient(#666, #666) center / 3px 1px no-repeat, linear-gradient(#666, #666) center / 1px 3px no-repeat #fff; }
.red .nm, .cyan .nm { border-right-color: #444; }
.cur .n, .cur .code { font-weight: 700; }
.cur .nm { background: #fff; font-weight: 700; outline: 1px solid #3567b5; outline-offset: -1px; }
.sq { background: linear-gradient(135deg, transparent 50%, #27527c 50%) right 1px bottom 1px / 4px 4px no-repeat #f1f1f1; }

/* fee breakdown */
.bt { border-top: 2px solid #2a8fca; border-bottom: 0; height: 15px; }
.bt button { padding: 0 5px; }
.bt .on { padding: 0 2px; }
.notch { position: absolute; left: 268px; top: 0; width: 25px; height: 5px; background: #2a8fca; display: flex; justify-content: center; clip-path: polygon(0 0, 100% 0, 88% 100%, 12% 100%); }
.notch svg { width: 7px; height: 4px; }
.low { flex: none; height: 83px; display: flex; overflow: hidden; }
.lowclip { flex: 1; background: #fff; overflow: hidden; min-width: 0; }
.fees { width: 371px; border-style: hidden; }
.f0 { width: 26px; }
.f1 { width: 34px; }
.f2 { width: 81px; }
.f3 { width: 71px; }
.f4 { width: 27px; }
.f5 { width: 64px; }
.f6 { width: 68px; }
.fees thead tr { height: 11px; }
.fees tbody tr { height: 10px; }
.fees tbody tr:nth-child(5n+2), .fees tbody tr:nth-child(5n+4) { height: 9px; }
.fees td, .fees th { line-height: 8px; }
.fees td { padding-left: 1px; }
.ivory { background: #fbfff4; }
.fees .on > td { background: #0aa2fa; color: #fff; }
.fees tr .fn { background: #f0f0f0; color: #222; text-align: center; }
.fees .on > .fn { background: #f0f0f0; color: #222; }
.fees .on .fc { outline: 1px solid #234a9c; outline-offset: -1px; }
.fees .fnm { border-top: 0; border-bottom: 0; }
.fnm div { display: flex; align-items: center; height: 8px; gap: 4px; padding-left: 2px; }
.fnm .gd::after { top: 4px; }
.fnm.d1 div { padding-left: 12px; gap: 3px; }
.fnm.d2 div { padding-left: 22px; gap: 3px; }
.side { width: 141px; flex: none; padding: 9px 10px 0 3px; display: flex; flex-direction: column; }
.nmrow { display: flex; align-items: center; gap: 4px; }
.nmrow select, .status select { flex: 1; height: 13px; border: 1px solid #aaa; padding-left: 3px; background: conic-gradient(from 315deg at 50% 100%, #777 90deg, transparent 0) right 4px center / 5px 3px no-repeat, #fff; }
.ck { margin-top: 3px; }
.bs { display: flex; gap: 4px; margin-top: 13px; }
.bs button { flex: 1; height: 13px; background: #e1e1e1; border: 1px solid #adadad; }
input[type="checkbox"] { appearance: none; width: 8px; height: 8px; border: 1px solid #3b86b6; background: #fff; margin-right: 2px; position: relative; flex: none; }
input[type="checkbox"]:checked { background: #2779ae; }
input[type="checkbox"]:checked::after { content: ""; position: absolute; left: 1px; top: 1px; width: 5px; height: 3px; border: solid #fff; border-width: 0 0 1px 1px; transform: rotate(-45deg); }
input.line[type="checkbox"] { border-color: #777; background: #fff; width: 7px; height: 7px; margin-right: 1px; }
input.line[type="checkbox"]:checked::after { border-color: #111; left: 0; top: 0; }

/* recommendation pane */
.right { width: 335px; flex: none; display: flex; flex-direction: column; }
.rh { height: 14px; background: #d6d6d6; display: flex; align-items: center; padding: 0 7px 0 8px; gap: 4px; flex: none; }
.rh span { flex: 1; }
.rh button { width: 26px; height: 10px; border-radius: 3px; background: #2779ae; color: #fff; }
.rt { height: 15px; margin-left: 2px; }
.rt button { padding: 0 3px; }
.rt .on { padding: 0 4px; }
.rf { height: 18px; display: flex; align-items: center; padding-left: 8px; gap: 16px; flex: none; }
.rf a { color: #1414e0; margin-left: -10px; }
.rclip { flex: 1; background: #fff; overflow: hidden; margin-left: 2px; min-height: 0; }
.rtab { width: 345px; border-style: hidden; }
.r0 { width: 17px; }
.r1 { width: 23px; }
.r2 { width: 19px; }
.r3 { width: 114px; }
.r4 { width: 28px; }
.r5 { width: 36px; }
.rtab tr { height: 11px; }
.rtab a { color: #2779ae; }
.rtab .pm { vertical-align: middle; margin-left: 4px; }
.star { color: #888; }
.rtab .e td:first-child { border: 0; }
.right .hs { padding: 0 3px 0 4px; }
h2 { height: 14px; line-height: 14px; padding-left: 6px; background: #f3f3f3; flex: none; }
.feat { flex: none; height: 71px; background: #fff; display: flex; margin: 0 0 -12px 2px; position: relative; z-index: 1; }
.feat p { flex: 1; line-height: 10px; }
.feat .vs { color: #aaa; }

/* status bar */
.status { flex: none; height: 12px; width: calc(100% - 337px); display: flex; align-items: center; padding-left: 7px; gap: 5px; background: #e9e9e9; }
.rd { border: solid #ccc; border-width: 0 1px; padding: 0 13px; }
.cn { flex: 1; }
.cnt { margin-right: 152px; }
.status select { flex: none; width: 31px; height: 12px; padding-left: 2px; }
.status button { width: 8px; height: 8px; border: 1px solid #777; border-radius: 50%; line-height: 6px; }
.status > button:last-child { margin-right: 6px; }
input[type="range"] { appearance: none; width: 39px; height: 10px; background: linear-gradient(#ccc, #ccc) center / 100% 1px no-repeat; }
input[type="range"]::-webkit-slider-thumb { appearance: none; width: 6px; height: 10px; background: #0a78d4; border-radius: 0 0 3px 3px; }

/* drop-down menu */
.menu { position: absolute; left: 339px; top: 73px; width: 59px; background: #fff; border: 1px solid #aaa; padding: 1px; display: flex; flex-direction: column; }
.menu button { height: 14px; justify-content: flex-start; gap: 5px; }
.menu i { width: 12px; height: 14px; background: #f3f3f3; display: flex; align-items: center; justify-content: center; }
.menu .k { height: 12px; background: #e3e8ee; border: 1px solid #c9d0da; }
.menu svg { width: 6px; height: 6px; }

/* dialog */
.dlg { position: absolute; left: 321px; top: 163px; width: 465px; height: 309px; background: #fff; border: 1px solid #2779ae; display: flex; flex-direction: column; box-shadow: 1px 1px 4px #0006; }
.dt { height: 17px; background: #2779ae; color: #fff; display: flex; align-items: center; gap: 3px; padding: 0 8px 0 2px; flex: none; }
.dt > svg { width: 9px; height: 9px; }
.dt span { flex: 1; color: #d3e6f2; }
.dt button svg { width: 7px; height: 7px; }
.dd { height: 25px; line-height: 25px; padding-left: 16px; background: linear-gradient(100deg, #fff, transparent 30%), linear-gradient(#deebfb, #f8fbff); border-bottom: 1px solid #dfe3e8; flex: none; }
.db { flex: 1; display: flex; }
.dl { width: 128px; border-right: 2px solid #dcdfe3; }
.dlh { height: 17px; line-height: 16px; text-align: center; border-bottom: 1px solid #e0e0e0; }
.dl .l0 .tx { background: #cce4fb; padding: 0 1px; }
.dl .l2 { padding-left: 28px; }
.dl .gd { margin-right: 1px; }
.dl input.line[type="checkbox"] { margin-right: 2px; }
.dl .l1 input.line[type="checkbox"], .dl .l2 input.line[type="checkbox"] { margin-right: 1px; }
.df { flex: 1; display: flex; flex-direction: column; padding-left: 1px; }
.sec { display: grid; grid-template-columns: 50px 66px 63px 1fr; padding-left: 26px; border-bottom: 1px solid #e6e6e6; align-items: center; justify-items: start; }
.a { height: 73px; }
.s { height: 38px; }
.m { height: 79px; grid-template-columns: 50px 1fr; }
.a .lb, .m .lb { margin-bottom: 9px; }
.pick { display: flex; flex-direction: column; gap: 9px; align-items: flex-start; padding-top: 4px; }
.pick svg { width: 22px; height: 26px; margin-left: 3px; }
.pick .wd { width: 28px; margin-left: 2px; }
.iy { font: 700 6px "Liberation Serif", serif; fill: #fff; }
.opts { display: flex; flex-direction: column; gap: 19px; justify-self: stretch; align-items: flex-start; padding-bottom: 11px; }
.rad { display: grid; grid-template-columns: 81px 80px auto; }
input[type="radio"] { appearance: none; width: 8px; height: 8px; border: 1px solid #2779ae; border-radius: 50%; background: #fff; margin-right: 2px; }
input[type="radio"]:checked { background: radial-gradient(#2779ae 2px, #fff 3px); }
.go { flex: 1; display: flex; align-items: center; padding: 0 0 9px 76px; }
.go button { width: 153px; height: 22px; border-radius: 11px; background: #2779ae; color: #e7f1f7; font-size: 9px; }
.dft { height: 17px; border-top: 1px solid #dfe3e8; display: flex; align-items: center; padding-left: 13px; gap: 6px; flex: none; }
.dft i { width: 7px; height: 7px; border-radius: 50%; background: #2a8ada; color: #fff; font-size: 6px; line-height: 7px; text-align: center; }

/* floating input-method bar and watermark */
.ime { position: absolute; right: 11px; bottom: 14px; height: 15px; width: 116px; background: #fff; border: 1px solid #c5d3e0; display: flex; align-items: center; color: #1d74c5; font-size: 8px; justify-content: space-between; padding-right: 2px; z-index: 2; }
.ime svg { width: 9px; height: 9px; }
.ime .so { width: 15px; height: 15px; }
.ime .gy { color: #a9bfd6; }
.mark { position: absolute; left: 9px; bottom: 6px; display: flex; align-items: center; gap: 5px; color: #fff; font-size: 21px; line-height: 28px; text-shadow: 0 0 2px #777, 1px 1px 2px #888; }
.mark svg { width: 40px; height: 28px; fill: none; stroke: #fff; stroke-width: 3; filter: drop-shadow(0 0 1px #888); }
</style>
